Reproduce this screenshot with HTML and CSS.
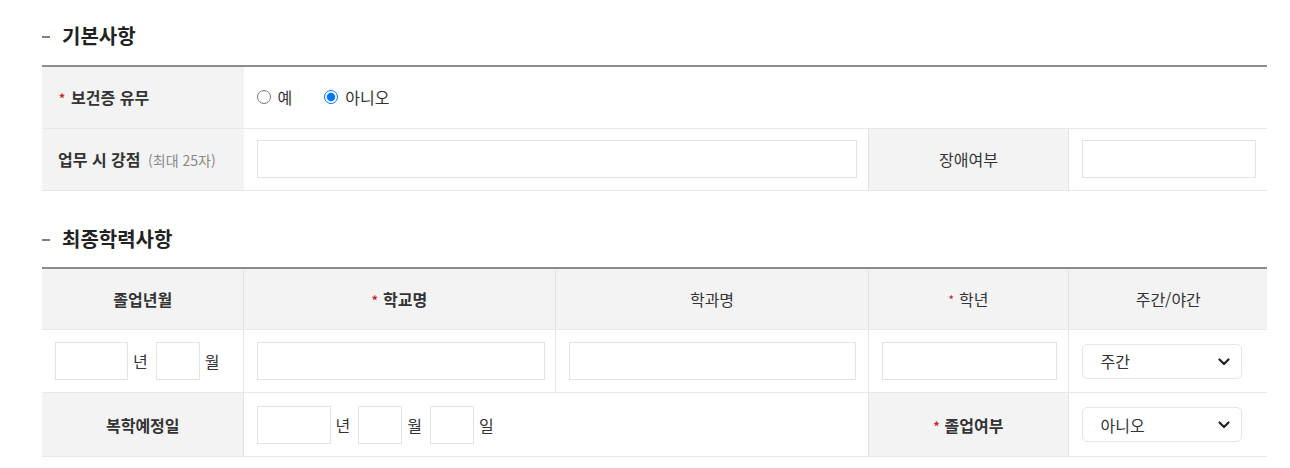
FILE: index.html
```html
<!DOCTYPE html>
<html lang="ko">
<head>
<meta charset="utf-8">
<title>입력</title>
<link rel="stylesheet" href="styles.css">
</head>
<body>
<div class="page">
  <section class="section first">
    <h2 class="title"><span class="dash"></span>기본사항</h2>
    <table class="form">
      <colgroup><col class="c1"><col class="c2"><col class="c3"><col class="c4"><col class="c5"></colgroup>
      <tr>
        <th class="left"><span class="req">*</span>보건증 유무</th>
        <td colspan="4" class="nob">
          <div class="radios">
            <label class="radio"><input type="radio" name="health">예</label>
            <label class="radio"><input type="radio" name="health" checked>아니오</label>
          </div>
        </td>
      </tr>
      <tr>
        <th class="left">업무 시 강점 <span class="hint">(최대 25자)</span></th>
        <td colspan="2" class="nob"><input type="text" class="txt w600"></td>
        <th class="normal">장애여부</th>
        <td><input type="text" class="txt w174"></td>
      </tr>
    </table>
  </section>

  <section class="section second">
    <h2 class="title"><span class="dash"></span>최종학력사항</h2>
    <table class="form">
      <colgroup><col class="c1"><col class="c2"><col class="c3"><col class="c4"><col class="c5"></colgroup>
      <tr>
        <th>졸업년월</th>
        <th><span class="req">*</span>학교명</th>
        <th class="normal">학과명</th>
        <th class="normal"><span class="req">*</span>학년</th>
        <th class="normal">주간/야간</th>
      </tr>
      <tr class="mid">
        <td>
          <div class="date">
            <input type="text" class="txt w73"><span class="unit">년</span>
            <input type="text" class="txt w44"><span class="unit">월</span>
          </div>
        </td>
        <td><input type="text" class="txt w288"></td>
        <td><input type="text" class="txt w287"></td>
        <td><input type="text" class="txt w175"></td>
        <td>
          <div class="select">
            <select><option>주간</option><option>야간</option></select>
            <svg class="chev" width="12" height="8" viewBox="0 0 12 8"><path d="M1.5 1.5 L6 6 L10.5 1.5" fill="none" stroke="#222" stroke-width="2.2" stroke-linecap="round" stroke-linejoin="round"/></svg>
          </div>
        </td>
      </tr>
      <tr class="tall">
        <th>복학예정일</th>
        <td colspan="2">
          <div class="date">
            <input type="text" class="txt w74"><span class="unit">년</span>
            <input type="text" class="txt w44"><span class="unit">월</span>
            <input type="text" class="txt w44"><span class="unit">일</span>
          </div>
        </td>
        <th><span class="req">*</span>졸업여부</th>
        <td>
          <div class="select">
            <select><option>아니오</option><option>예</option></select>
            <svg class="chev" width="12" height="8" viewBox="0 0 12 8"><path d="M1.5 1.5 L6 6 L10.5 1.5" fill="none" stroke="#222" stroke-width="2.2" stroke-linecap="round" stroke-linejoin="round"/></svg>
          </div>
        </td>
      </tr>
    </table>
  </section>
</div>
</body>
</html>
```

FILE: styles.css
```css
* { box-sizing: border-box; }
html, body { margin: 0; padding: 0; background: #fff; }
body {
  font-family: "Noto Sans CJK KR", "Noto Sans", sans-serif;
  font-size: 16px;
  color: #333;
}
.page { padding: 0 23px 0 42px; width: 1290px; }
.section.first { padding-top: 22px; }
.section.second { padding-top: 34px; }
.title {
  margin: 0 0 15px;
  height: 28px;
  line-height: 28px;
  font-size: 20px;
  font-weight: 700;
  color: #222;
  display: flex;
  align-items: center;
}
.section.second .title { margin-bottom: 14px; }
.dash {
  display: inline-block;
  width: 8px;
  height: 2px;
  background: #808080;
  margin: 2px 12px 0 0;
}
.form {
  width: 1225px;
  border-collapse: collapse;
  table-layout: fixed;
  border-top: 2px solid #8c8c8c;
}
.c1 { width: 201px; }
.c2 { width: 312px; }
.c3 { width: 313px; }
.c4 { width: 200px; }
.c5 { width: 199px; }
.form tr { height: 62px; }
.form tr.mid { height: 63px; }
.form tr.tall { height: 64px; }
.form th, .form td {
  padding: 0 12px 0 13px;
  border-bottom: 1px solid #e8e8e8;
  border-left: 1px solid #e3e3e3;
  vertical-align: middle;
}
.form tr > :first-child { border-left: none; }
.form th {
  background: #f3f3f3;
  font-weight: 700;
  text-align: center;
  color: #333;
}
.form th.normal { font-weight: 400; }
.form th.left { text-align: left; padding-left: 16px; }
.form td.nob { border-left-color: #f3f3f3; }
.req { color: #c8201a; font-size: 12px; margin-right: 5px; position: relative; top: -1px; }
th.left .req { margin-left: 1px; margin-right: 6px; }
.hint { font-size: 14px; color: #888; font-weight: 400; margin-left: 3px; }
.radios { display: flex; align-items: center; gap: 32px; }
.radio { display: flex; align-items: center; color: #333; }
.radio input { margin: 0 7px 0 0; width: 14px; height: 14px; }
.txt {
  height: 38px;
  border: 1px solid #e3e3e3;
  background: #fff;
  font: inherit;
  padding: 0 8px;
  display: block;
}
.w600 { width: 600px; }
.w174 { width: 174px; }
.w73 { width: 73px; }
.w74 { width: 74px; }
.w44 { width: 44px; }
.w288 { width: 288px; }
.w287 { width: 287px; }
.w175 { width: 175px; }
.date { display: flex; align-items: center; }
.unit { margin: 0 8px 0 5px; color: #333; }
.select { position: relative; width: 160px; }
.select select {
  appearance: none;
  -webkit-appearance: none;
  width: 160px;
  height: 35px;
  border: 1px solid #e6e6e6;
  border-radius: 5px;
  background: #fff;
  font: inherit;
  color: #333;
  padding: 0 30px 0 18px;
  display: block;
}
.chev { position: absolute; right: 12px; top: 14px; pointer-events: none; }
```
